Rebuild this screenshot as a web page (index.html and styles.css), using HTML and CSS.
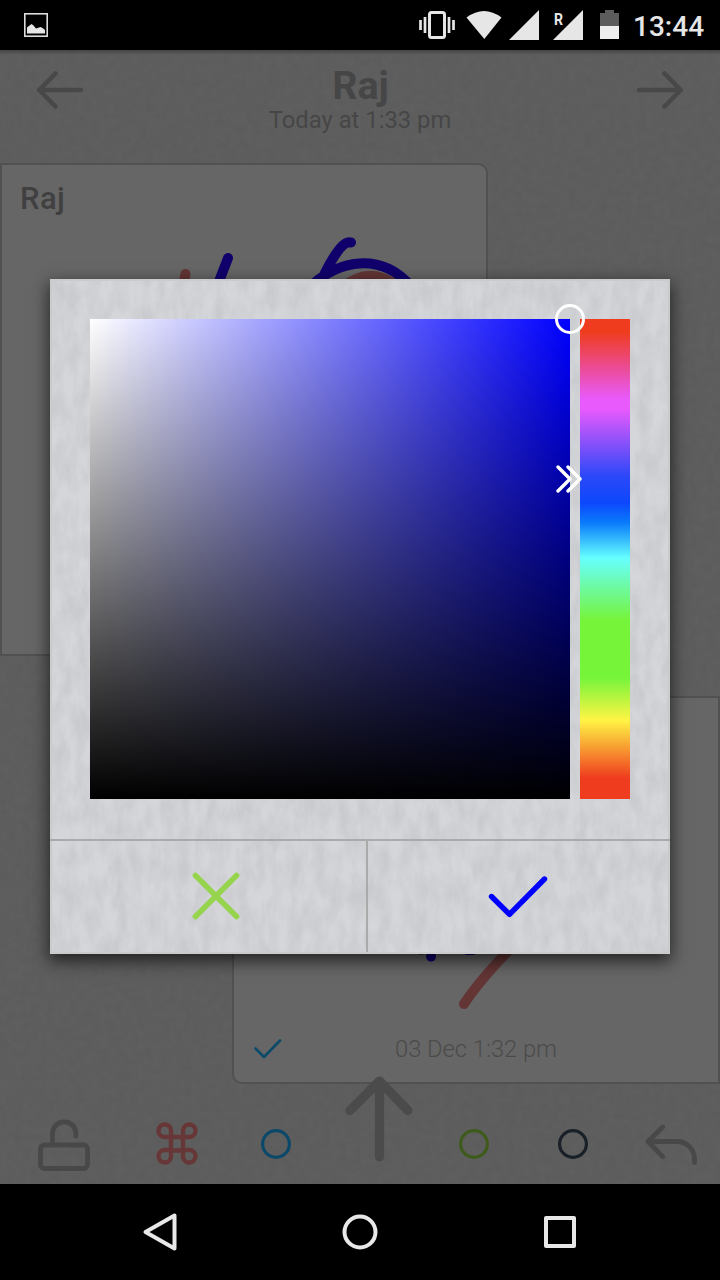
FILE: index.html
```html
<!DOCTYPE html>
<html lang="en">
<head>
<meta charset="utf-8">
<title>Raj</title>
<link rel="stylesheet" href="styles.css">
</head>
<body>
<div class="screen">
  <header class="status">
    <svg class="status-photo" width="24" height="24" viewBox="0 0 24 24"><rect x=".8" y=".8" width="22.4" height="22.4" fill="none" stroke="#dcdcda" stroke-width="1.6"/><path d="M3 20.500V14.500l4.500-3.500 2 1.500 2.500 3 4.500-1.500 2 1 2.500 2v3.500z" fill="#e6e6e6"/></svg>
    <div class="status-right">
      <svg width="204" height="32" viewBox="418 9 204 32">
        <rect x="429.500" y="12.500" width="15" height="25" rx="2" fill="none" stroke="#e6e6e6" stroke-width="3"/>
        <path d="M425 17v16M449 17v16M420.500 20v10M453.500 20v10" stroke="#e6e6e6" stroke-width="2.700" fill="none"/>
        <path d="M466.500 17.500Q484 4.500 501.500 17.500L484.300 39z" fill="#e6e6e6"/>
        <path d="M539 10v30h-30z" fill="#e6e6e6"/>
        <path d="M583 10v30h-30z" fill="#e6e6e6"/>
        <text x="554" y="24.500" class="roaming" textLength="9" lengthAdjust="spacingAndGlyphs">R</text>
        <path d="M605 10h9v3h5v13h-19V13h5z" fill="#5c5c5c"/><path d="M600 26h19v13h-19z" fill="#eee"/>
      </svg>
      <span class="clock">13:44</span>
    </div>
  </header>

  <main class="app">
    <svg class="paper" width="720" height="1134">
      <filter id="grain" x="0" y="0" width="100%" height="100%" color-interpolation-filters="sRGB"><feTurbulence type="fractalNoise" baseFrequency=".13" numOctaves="3" seed="4"/><feColorMatrix values="0 0 0 0 .2  0 0 0 0 .2  0 0 0 0 .2  1 0 0 0 -.25"/></filter>
      <rect width="720" height="1134" filter="url(#grain)" opacity=".12"/>
    </svg>
    <div class="topbar">
      <svg width="48" height="40" viewBox="0 0 48 40"><path d="M45 20H4M19.500 3.500L3.200 20l16.300 16.500" class="line"/></svg>
      <div class="heading"><h1>Raj</h1><p>Today at 1:33 pm</p></div>
      <svg width="48" height="40" viewBox="0 0 48 40"><path d="M3 20h41M28.500 3.500L44.800 20l-16.300 16.500" class="line"/></svg>
    </div>

    <section class="card card-in">
      <h2>Raj</h2>
      <svg class="ink" width="484" height="130" viewBox="2 230 484 130" fill="none" stroke-linecap="round" stroke-linejoin="round" stroke-width="10">
        <path d="M185.500 274l-4 20" stroke="#633535"/>
        <path d="M342 288Q370 264 400 288z" fill="#633535" stroke="#633535"/>
        <path d="M228 258l-10 26M351 242.500Q342 239 325 273M308 289C330 265 375 248 409 284" stroke="#10006c"/>
      </svg>
    </section>

    <section class="card card-out">
      <svg class="ink" width="300" height="70" viewBox="400 945 300 70" fill="none" stroke-linecap="round" stroke-width="10">
        <path d="M421 950v.1" stroke="#633535"/><path d="M512 947Q479 981 464 1004" stroke="#633535"/>
        <path d="M431 956.500v.1M467 950h6" stroke="#10006c"/>
      </svg>
      <footer>
        <svg width="30" height="22" viewBox="0 0 30 22"><path d="M2.500 10.500l8.500 8.500L27 2.500" fill="none" stroke="#0b4a6b" stroke-width="2.600" stroke-linecap="round" stroke-linejoin="round"/></svg>
        <time>03 Dec 1:32 pm</time>
      </footer>
    </section>

    <nav class="tools">
      <svg width="720" height="116" viewBox="0 1068 720 116" fill="none" stroke-linecap="round" stroke-linejoin="round">
        <g stroke="#484848">
          <rect x="40.500" y="1145" width="47" height="23.500" rx="4" stroke-width="4.800"/>
          <path d="M52.500 1144v-10.500a11.700 11.700 0 0 1 23.400 0v2.500" stroke-width="4.800"/>
          <path d="M379.500 1157v-74M350 1110.500L379.500 1081l28.500 29.500" stroke="#4b4b4b" stroke-width="9.200"/>
          <path d="M662.700 1127L648 1141.500l14.700 15.200M649 1141.500h28a17.500 17.500 0 0 1 17.500 17.500v3.500" stroke-width="4.800"/>
        </g>
        <path d="M171 1137h12v13.500h-12zM171 1137h-6.500a6.250 6.250 0 1 1 6.500-6.500zM183 1137v-6.500a6.250 6.250 0 1 1 6.500 6.500zM183 1150h6.500a6.250 6.250 0 1 1-6.500 6.500zM171 1150v6.500a6.250 6.250 0 1 1-6.500-6.500z" stroke="#673636" stroke-width="4.400"/>
        <g stroke-width="3.200"><circle cx="276" cy="1144" r="13.400" stroke="#0c4868"/><circle cx="474" cy="1144" r="13.400" stroke="#3f5b1b"/><circle cx="573" cy="1144" r="13.400" stroke="#192028"/></g>
      </svg>
    </nav>

    <div class="dialog">
      <svg class="linen" width="616" height="671">
        <filter id="weave" x="0" y="0" width="100%" height="100%" color-interpolation-filters="sRGB"><feTurbulence type="fractalNoise" baseFrequency=".08 .035" numOctaves="4" seed="8"/><feColorMatrix values="0 0 0 0 .6  0 0 0 0 .61  0 0 0 0 .62  2 0 0 0 -.6"/></filter>
        <rect width="616" height="671" filter="url(#weave)" opacity=".2"/>
      </svg>
      <div class="picker">
        <div class="shade"><svg class="ring" width="30" height="30"><circle cx="15" cy="15" r="13.500" fill="none" stroke="#fff" stroke-width="3"/></svg></div>
        <div class="hue"><svg class="pointer" width="28" height="30" viewBox="0 0 28 30" fill="none" stroke="#fff" stroke-width="3.400" stroke-linecap="round" stroke-linejoin="round"><path d="M4 3L16 15 4 27M14 3L26 15 14 27"/></svg></div>
      </div>
      <div class="actions">
        <button class="cancel" aria-label="Cancel"><svg width="48" height="48" viewBox="0 0 48 48"><path d="M3.500 3.500l41 41M44.500 3.500l-41 41" fill="none" stroke="#97d44e" stroke-width="5.600" stroke-linecap="round"/></svg></button>
        <button class="confirm" aria-label="OK"><svg width="60" height="44" viewBox="0 0 60 44"><path d="M3.500 21.500L21.500 39.300 56.500 4" fill="none" stroke="#00f" stroke-width="5.400" stroke-linecap="round" stroke-linejoin="round"/></svg></button>
      </div>
    </div>
  </main>

  <nav class="system">
    <svg width="440" height="40" viewBox="140 1212 440 40" fill="none" stroke="#e8e8e8" stroke-width="4" stroke-linejoin="round"><path d="M174.500 1215.500v33L145.500 1232z"/><circle cx="360" cy="1232" r="15.500"/><rect x="546" y="1218" width="28" height="28"/></svg>
  </nav>
</div>
</body>
</html>
```

FILE: styles.css
```css
* { box-sizing: border-box; }
body { margin: 0; font-family: Roboto, sans-serif; }
svg { display: block; flex: none; }
h1, h2, p { margin: 0; }

.screen { width: 720px; height: 1280px; display: flex; flex-direction: column; background: #000; overflow: hidden; }

.status { height: 50px; flex: none; display: flex; justify-content: space-between; padding: 0 14px 0 24px; }
.status-photo { margin-top: 13px; }
.status-right { display: flex; gap: 11px; padding-top: 9px; }
.roaming { font: 700 16px Roboto, sans-serif; fill: #e6e6e6; }
.clock { width: 73px; color: #e6e6e6; font-size: 28px; font-weight: 500; line-height: 35px; white-space: nowrap; }

.app { position: relative; height: 1134px; flex: none; display: flex; flex-direction: column; background: #5f5f5f; overflow: hidden; }
.app::before { content: ""; position: absolute; inset: 0 0 auto; height: 5px; background: linear-gradient(#464646, transparent); }
.paper { position: absolute; inset: 0; }
.line { fill: none; stroke: #484848; stroke-width: 4.6; stroke-linecap: round; stroke-linejoin: round; }

.topbar { position: relative; height: 113px; flex: none; display: flex; justify-content: space-between; padding: 20px 36px 0; color: #464646; }
.heading { text-align: center; padding-top: 1px; }
.heading h1 { font-size: 39.5px; line-height: 30px; font-weight: 700; padding-left: 1px; }
.heading p { font-size: 23.8px; line-height: 28px; margin-top: 5px; }

.card { position: relative; width: 488px; flex: none; background: #666; border: 2px solid #515151; }
.card-in { height: 493px; border-radius: 0 10px 0 0; }
.card-in h2 { padding: 16px 0 0 18px; font-size: 31px; line-height: 36px; font-weight: 500; letter-spacing: .4px; color: #404040; }
.card-in .ink { margin-top: 13px; }
.card-out { height: 388px; margin: 40px 0 0 232px; border-radius: 10px 0 0 10px; padding-top: 247px; }
.card-out .ink { margin-left: 166px; }
.card-out footer { display: flex; align-items: center; padding: 19px 0 0 19px; }
.card-out time { margin-left: 112px; font-size: 23.7px; line-height: 30px; font-weight: 300; color: #4b4b4b; }

.tools { position: absolute; inset: auto 0 0; }

.dialog { position: absolute; left: 50px; top: 229px; width: 620px; height: 675px; background: #d4d6d9; border: 2px solid #c9cbcc; box-shadow: 0 6px 16px 1px rgba(0, 0, 0, .65); display: flex; flex-direction: column; }
.linen { position: absolute; inset: 0; }
.picker { position: relative; display: flex; gap: 10px; padding: 38px; height: 558px; flex: none; }
.shade { position: relative; width: 480px; height: 480px; background: linear-gradient(transparent, #000), linear-gradient(to right, #fff, #00f); }
.ring { position: absolute; top: -15px; right: -15px; z-index: 1; }
.hue { position: relative; width: 50px; height: 480px; background: linear-gradient(#ef3c1e 0 13px, #e85afc 80px 90px, #2c48f8 157px, #0d48fc 184px, #0a7cfb 204px, #66ffff 239px, #76f43a 301px 359px, #fff544 401px, #ef3c1e 459px); }
.pointer { position: absolute; left: -26px; top: 145px; }
.actions { position: relative; flex: 1; display: flex; border-top: 2px solid #a9aaaa; margin: 0 -2px; }
.actions button { display: flex; align-items: flex-start; background: none; border: 0; padding: 0; }
.actions .cancel { width: 318px; padding: 31px 0 0 142px; border-right: 2px solid #a9aaaa; }
.actions .confirm { flex: 1; padding: 34px 0 0 120px; }

.system { flex: 1; display: flex; align-items: center; justify-content: center; }
```
